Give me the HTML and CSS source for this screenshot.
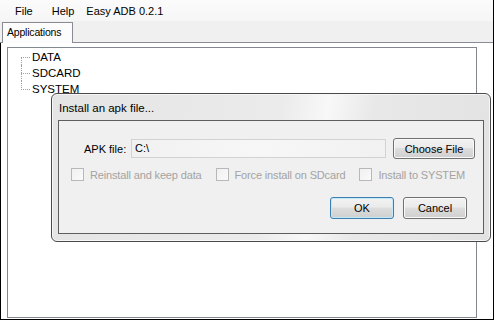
FILE: index.html
```html
<!DOCTYPE html>
<html lang="en">
<head>
    <meta charset="UTF-8">
    <title>Easy ADB 0.2.1</title>
    <link rel="stylesheet" href="styles.css">
</head>
<body>
    <div class="window">
        <div class="menubar">
            <span class="menu-item">File</span>
            <span class="menu-item">Help</span>
            <span class="menu-title">Easy ADB 0.2.1</span>
        </div>
        <div class="tabstrip">
            <span class="tab">Applications</span>
        </div>
        <div class="page">
            <div class="tree">
                <ul>
                    <li>DATA</li>
                    <li>SDCARD</li>
                    <li>SYSTEM</li>
                </ul>
            </div>
        </div>

        <div class="dialog">
            <div class="dialog-title">Install an apk file...</div>
            <div class="dialog-body">
                <div class="row-file">
                    <label class="file-label">APK file:</label>
                    <div class="file-input">C:\</div>
                    <button class="btn btn-choose">Choose File</button>
                </div>
                <div class="row-checks">
                    <span class="check"><span class="check-box"></span>Reinstall and keep data</span>
                    <span class="check"><span class="check-box"></span>Force install on SDcard</span>
                    <span class="check"><span class="check-box"></span>Install to SYSTEM</span>
                </div>
                <div class="row-actions">
                    <button class="btn btn-default">OK</button>
                    <button class="btn">Cancel</button>
                </div>
            </div>
        </div>
    </div>
</body>
</html>
```

FILE: styles.css
```css
*{
    box-sizing: border-box;
}
body{
    margin: 0;
    width: 496px;
    height: 320px;
    overflow: hidden;
    background-color: #fff;
    font-family: "Liberation Sans", Arial, sans-serif;
    font-size: 11px;
    color: #000;
}
.window{
    position: relative;
    width: 494px;
    height: 320px;
    border-right: 1px solid #000;
    border-bottom: 1px solid #000;
    display: flex;
    flex-direction: column;
}

/* menu */
.menubar{
    height: 21px;
    display: flex;
    align-items: center;
    padding-left: 6px;
    background: linear-gradient(#fbfbfb, #f6f6f6);
}
.menu-item{
    padding: 0 9px;
}
.menu-item + .menu-item{
    padding-left: 10px;
}
.menu-title{
    padding-left: 3px;
}

/* tabs */
.tabstrip{
    height: 22px;
    display: flex;
    align-items: flex-end;
    padding-left: 2px;
    background-color: #f0f0f0;
    border-bottom: 1px solid #898c95;
}
.tab{
    width: 71px;
    height: 21px;
    margin-bottom: -1px;
    padding: 3px 0 0 4px;
    border: 1px solid #898c95;
    border-bottom: none;
    background-color: #fcfcfc;
    font-size: 10.5px;
    letter-spacing: -0.2px;
}
.page{
    flex: 1;
    padding: 4px 16px 1px 6px;
    border-left: 1px solid #000;
}
.tree{
    height: 100%;
    border: 1px solid #828790;
    background-color: #fff;
}
.tree ul{
    list-style: none;
    margin: 0;
    padding: 1px 0 0 13px;
}
.tree li{
    position: relative;
    height: 16px;
    line-height: 16px;
    padding-left: 11px;
    font-size: 11.5px;
}
.tree li::before{
    content: "";
    position: absolute;
    left: 0;
    top: 8px;
    width: 9px;
    border-top: 1px dotted #a0a0a0;
}
.tree li::after{
    content: "";
    position: absolute;
    left: 0;
    top: 0;
    bottom: 0;
    border-left: 1px dotted #a0a0a0;
}
.tree li:first-child::after{
    top: 8px;
}
.tree li:last-child::after{
    bottom: 7px;
}

/* dialog */
.dialog{
    position: absolute;
    left: 51px;
    top: 93px;
    width: 440px;
    height: 149px;
    display: flex;
    flex-direction: column;
    padding: 0 6px 7px 6px;
    border: 1px solid #4a4a4a;
    border-radius: 6px;
    background: linear-gradient(100deg, #e4e4e4 0%, #ebebeb 50%, #f8f8f8 60%, #e8e8e8 70%, #e2e2e2 100%);
    box-shadow: inset 0 0 0 1px #f7f7f7;
}
.dialog-title{
    height: 26px;
    line-height: 28px;
    padding-left: 1px;
    font-size: 11.5px;
}
.dialog-body{
    flex: 1;
    border: 1px solid #5e5e5e;
    background-color: #f0f0f0;
}
.row-file{
    display: flex;
    align-items: center;
    height: 21px;
    margin-top: 17px;
    padding-left: 25px;
}
.file-label{
    width: 47px;
}
.file-input{
    width: 255px;
    height: 19px;
    line-height: 17px;
    padding-left: 3px;
    border: 1px solid #d2d2d2;
    background: linear-gradient(90deg, #f1f1f1, #f7f7f7 50%, #f1f1f1);
}
.btn{
    height: 21px;
    padding: 0;
    border: 1px solid #707070;
    border-radius: 3px;
    background: linear-gradient(#f2f2f2 0%, #ebebeb 45%, #dddddd 50%, #cfcfcf 100%);
    box-shadow: inset 0 0 0 1px #fafafa;
    font-family: inherit;
    font-size: 11px;
    color: #000;
}
.btn-choose{
    width: 82px;
    margin-left: 7px;
}
.row-checks{
    display: flex;
    gap: 14px;
    height: 15px;
    margin-top: 8px;
    padding-left: 12px;
    color: #a3a3a3;
    letter-spacing: -0.15px;
}
.check{
    display: flex;
    align-items: center;
    gap: 6px;
}
.check-box{
    width: 13px;
    height: 13px;
    border: 1px solid #b8b8b8;
    background: linear-gradient(135deg, #f0f0f0, #fafafa);
}
.row-actions{
    display: flex;
    justify-content: flex-end;
    gap: 9px;
    margin-top: 15px;
    padding-right: 16px;
}
.row-actions .btn{
    width: 64px;
    height: 22px;
}
.btn-default{
    border-color: #3c7fb1;
    box-shadow: inset 0 0 0 1px #c4e8fb;
}
```
